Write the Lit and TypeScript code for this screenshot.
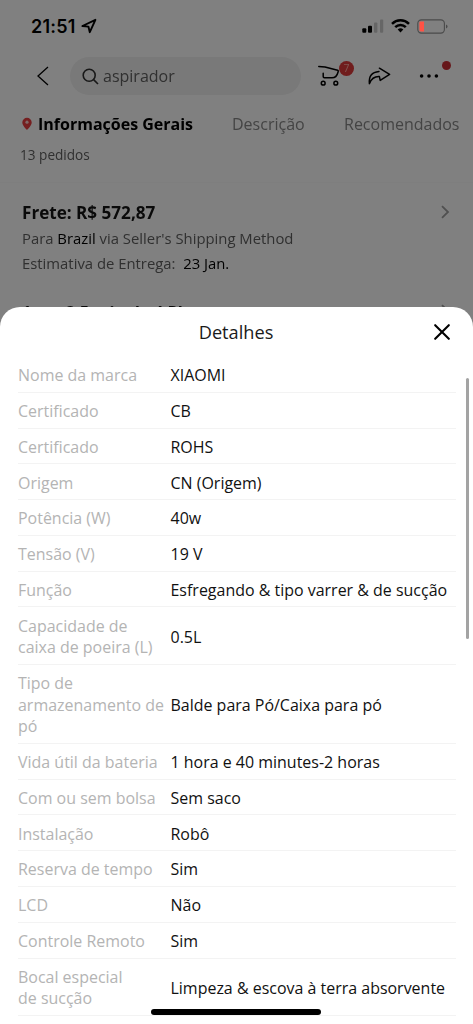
import { LitElement, html, css } from "lit";
import { customElement, property } from "lit/decorators.js";

interface Spec {
  label: string;
  value: string;
}

const SPECS: Spec[] = [
  { label: "Nome da marca", value: "XIAOMI" },
  { label: "Certificado", value: "CB" },
  { label: "Certificado", value: "ROHS" },
  { label: "Origem", value: "CN (Origem)" },
  { label: "Potência (W)", value: "40w" },
  { label: "Tensão (V)", value: "19 V" },
  { label: "Função", value: "Esfregando & tipo varrer & de sucção" },
  { label: "Capacidade de caixa\u00a0de poeira (L)", value: "0.5L" },
  { label: "Tipo de armazenamento de pó", value: "Balde para Pó/Caixa para pó" },
  { label: "Vida útil da bateria", value: "1 hora e 40 minutes-2 horas" },
  { label: "Com ou sem bolsa", value: "Sem saco" },
  { label: "Instalação", value: "Robô" },
  { label: "Reserva de tempo", value: "Sim" },
  { label: "LCD", value: "Não" },
  { label: "Controle Remoto", value: "Sim" },
  { label: "Bocal especial de\u00a0sucção", value: "Limpeza & escova à terra absorvente" },
];

@customElement("status-bar")
export class StatusBar extends LitElement {
  static styles = css`
    :host {
      display: flex;
      align-items: center;
      height: 52px;
      padding: 0 25px 0 31px;
      box-sizing: border-box;
      color: #000;
    }
    .time {
      padding-top: 2px;
      font: 600 18px/52px Inter, sans-serif;
      letter-spacing: 0.2px;
    }
    .loc {
      margin-left: 5px;
    }
    .icons {
      display: flex;
      align-items: center;
      margin-left: auto;
    }
    svg {
      display: block;
    }
    .wifi {
      margin-left: 7px;
    }
    .battery {
      margin-left: 7px;
    }
  `;
  render() {
    return html`
      <span class="time">21:51</span>
      <svg class="loc" width="16" height="16" viewBox="0 0 16 16" fill="none" stroke="#000" stroke-width="1.9" stroke-linejoin="round">
        <path d="M14.4 1.8L1.4 8L7.4 8.6L8.8 14.2Z" />
      </svg>
      <div class="icons">
        <svg width="22" height="16" viewBox="0 0 22 16">
          <rect x="0.3" y="10.2" width="4" height="4.6" rx="1" />
          <rect x="6" y="7.8" width="4" height="7" rx="1" />
          <rect x="12" y="4.5" width="3.4" height="10.3" rx="1" fill="#666" />
          <rect x="18" y="1.4" width="3.2" height="13.4" rx="1" fill="#666" />
        </svg>
        <svg class="wifi" width="19" height="14" viewBox="0 0 19 14" fill="none" stroke="#000" stroke-width="2.5">
          <path d="M1 4.8a12.2 12.2 0 0 1 17 0" />
          <path d="M4.2 8.1a7.6 7.6 0 0 1 10.6 0" />
          <path d="M6.7 10.4a4.2 4.2 0 0 1 5.6 0L9.5 13.4Z" fill="#000" stroke="none" />
        </svg>
        <svg class="battery" width="31" height="15" viewBox="0 0 31 15">
          <rect x="0.8" y="0.9" width="26.6" height="13.2" rx="3.6" fill="none" stroke="#4a4a4a" stroke-width="1.1" />
          <path d="M3.8 2.6H7V12.4H3.8A1.4 1.4 0 0 1 2.4 11V4A1.4 1.4 0 0 1 3.8 2.6Z" fill="#ff5245" />
          <path d="M29 5.4a2.2 2.2 0 0 1 0 4.2Z" fill="#4a4a4a" />
        </svg>
      </div>
    `;
  }
}

@customElement("product-page")
export class ProductPage extends LitElement {
  static styles = css`
    :host {
      display: block;
      height: 340px;
      overflow: hidden;
      color: #000;
    }
    svg {
      display: block;
      flex: none;
    }
    .nav {
      display: flex;
      align-items: center;
      height: 48px;
      padding: 0 34px 0 36px;
    }
    .search {
      display: flex;
      align-items: center;
      width: 231px;
      height: 38px;
      margin-left: 20px;
      padding-left: 12px;
      box-sizing: border-box;
      border-radius: 19px;
      background: #f2f2f2;
      color: #606060;
      font-size: 16px;
    }
    .search span {
      margin-left: 4px;
    }
    .cart {
      position: relative;
      margin-left: 17px;
    }
    .badge {
      position: absolute;
      left: 21px;
      top: -4px;
      width: 15px;
      height: 15px;
      border-radius: 50%;
      background: #e03a3a;
      color: #ffa9a0;
      font-size: 10.5px;
      line-height: 15px;
      text-align: center;
    }
    .share {
      margin-left: 28px;
    }
    .more {
      position: relative;
      margin-left: auto;
    }
    .dot {
      position: absolute;
      left: 23px;
      top: -13px;
      width: 9px;
      height: 9px;
      border-radius: 50%;
      background: #cc2e34;
    }
    .tabs {
      display: flex;
      align-items: center;
      height: 24px;
      margin-top: 12px;
      padding-left: 21px;
      white-space: nowrap;
      color: #888;
      font-size: 16px;
    }
    .active {
      margin-left: 5px;
      width: 194px;
      color: #000;
      font-weight: 700;
      font-size: 16px;
    }
    .descr {
      width: 112px;
    }
    .orders {
      margin: 10px 0 0 20px;
      color: #606060;
      font-size: 13.6px;
      line-height: 18px;
    }
    .rule {
      height: 1px;
      margin-top: 18px;
      background: #fafafa;
    }
    .head {
      display: flex;
      align-items: center;
      justify-content: space-between;
      margin-top: 16px;
      padding: 0 23px 0 22px;
      height: 26px;
      font-weight: 700;
      font-size: 17.1px;
      color: #141414;
    }
    .first {
      margin-bottom: 1px;
    }
    .line {
      padding-left: 22px;
      font-size: 14.85px;
      line-height: 25px;
      color: #606060;
      white-space: pre;
    }
    .line b {
      font-weight: 400;
      color: #000;
    }
    .lot {
      margin-top: 22px;
      font-size: 16.4px;
    }
  `;
  chevron() {
    return html`<svg width="9" height="14" viewBox="0 0 9 14" fill="none" stroke="#a0a0a0" stroke-width="1.8">
      <path d="M1 1.2L7 7L1 12.8" />
    </svg>`;
  }
  render() {
    return html`
      <div class="nav">
        <svg width="14" height="22" viewBox="0 0 14 22" fill="none" stroke="#000" stroke-width="1.3">
          <path d="M12 2L2 11L12 20" />
        </svg>
        <div class="search">
          <svg width="17" height="17" viewBox="0 0 17 17" fill="none" stroke="#303030" stroke-width="1.6">
            <circle cx="7.2" cy="7.2" r="6" />
            <path d="M11.6 11.6L16 16" />
          </svg>
          <span>aspirador</span>
        </div>
        <div class="cart">
          <svg width="22" height="22" viewBox="0 0 22 22" fill="none" stroke="#000" stroke-width="1.5" stroke-linecap="round" stroke-linejoin="round">
            <path d="M0.8 1.4L7 2.1L19.6 5.2Q20.6 5.6 20 7.2Q18.6 12.8 14 12.8H6.4Q5.2 12.8 5.2 11.6V8.2" />
            <circle cx="5.2" cy="18.2" r="1.9" />
            <circle cx="17.8" cy="18.2" r="1.9" />
          </svg>
          <span class="badge">7</span>
        </div>
        <svg class="share" width="23" height="18" viewBox="0 0 23 18" fill="none" stroke="#000" stroke-width="1.5" stroke-linecap="round" stroke-linejoin="round">
          <path d="M11.4 1.2L21.6 7.4L12.2 13.4L11.4 9.6Q4.4 9.2 1.4 16.6Q0.2 5.4 11 4.4" />
        </svg>
        <div class="more">
          <svg width="20" height="4" viewBox="0 0 20 4">
            <circle cx="2.6" cy="2" r="1.8" />
            <circle cx="10" cy="2" r="1.8" />
            <circle cx="17.4" cy="2" r="1.8" />
          </svg>
          <span class="dot"></span>
        </div>
      </div>
      <div class="tabs">
        <svg width="12" height="14" viewBox="0 0 12 14">
          <path fill="#ea3d40" d="M6 .8A4.7 4.7 0 0 0 1.3 5.5C1.3 8.6 6 13 6 13S10.7 8.6 10.7 5.5A4.7 4.7 0 0 0 6 .8Z" />
          <circle cx="6" cy="5.2" r="1.6" fill="#ffd0cc" />
        </svg>
        <span class="active">Informações Gerais</span>
        <span class="descr">Descrição</span>
        <span>Recomendados</span>
      </div>
      <div class="orders">13 pedidos</div>
      <div class="rule"></div>
      <div class="head first"><span>Frete: R$ 572,87</span>${this.chevron()}</div>
      <div class="line">Para <b>Brazil</b> via Seller's Shipping Method</div>
      <div class="line">Estimativa de Entrega:  <b>23 Jan.</b></div>
      <div class="head lot"><span>1 em 2.5 min de 4 Pl</span>${this.chevron()}</div>
    `;
  }
}

@customElement("details-sheet")
export class DetailsSheet extends LitElement {
  @property({ attribute: false }) specs: Spec[] = [];

  static styles = css`
    :host {
      display: block;
      overflow: hidden;
      border-radius: 20px 20px 0 0;
      background: #fff;
      color: #111;
    }
    .title {
      display: grid;
      grid-template-columns: 1fr auto 1fr;
      align-items: center;
      height: 50px;
      padding: 0 23px;
      font-size: 18.2px;
      color: #1a1a1a;
    }
    .title span {
      grid-column: 2;
      margin-left: -1px;
    }
    .close {
      justify-self: end;
    }
    .row {
      display: grid;
      grid-template-columns: 152.5px 1fr;
      align-items: center;
      margin: 0 17px 0 18px;
      padding: 8.3px 0 4.9px;
      border-bottom: 1px solid #f3f3f3;
      font-size: 15.97px;
      line-height: 21.6px;
    }
    .label {
      color: #b4b4b4;
      max-width: 150px;
    }
    .value {
      white-space: nowrap;
    }
    .scroll {
      position: absolute;
      right: 4px;
      top: 71px;
      width: 3px;
      height: 261px;
      border-radius: 2px;
      background: #a3a3a3;
    }
    .home {
      position: absolute;
      left: 151px;
      bottom: 9px;
      width: 170px;
      height: 6px;
      border-radius: 3px;
      background: #000;
    }
  `;
  render() {
    return html`
      <div class="title">
        <span>Detalhes</span>
        <svg class="close" width="16" height="16" viewBox="0 0 16 16" fill="none" stroke="#000" stroke-width="2.1" stroke-linecap="round">
          <path d="M1.2 1.2L14.8 14.8M14.8 1.2L1.2 14.8" />
        </svg>
      </div>
      ${this.specs.map(
        (s) => html`<div class="row"><span class="label">${s.label}</span><span class="value">${s.value}</span></div>`
      )}
      <div class="scroll"></div>
      <div class="home"></div>
    `;
  }
}

@customElement("app-root")
export class AppRoot extends LitElement {
  static styles = css`
    :host {
      display: block;
      position: relative;
      height: 1024px;
      overflow: hidden;
      background: #808080;
      font-family: "Open Sans", "Noto Sans", sans-serif;
    }
    .page {
      background: #fff;
      filter: brightness(0.502);
    }
    .sheet {
      position: absolute;
      inset: 307px 0 0 0;
    }
  `;
  render() {
    return html`
      <status-bar></status-bar>
      <product-page class="page"></product-page>
      <details-sheet class="sheet" .specs=${SPECS}></details-sheet>
    `;
  }
}
